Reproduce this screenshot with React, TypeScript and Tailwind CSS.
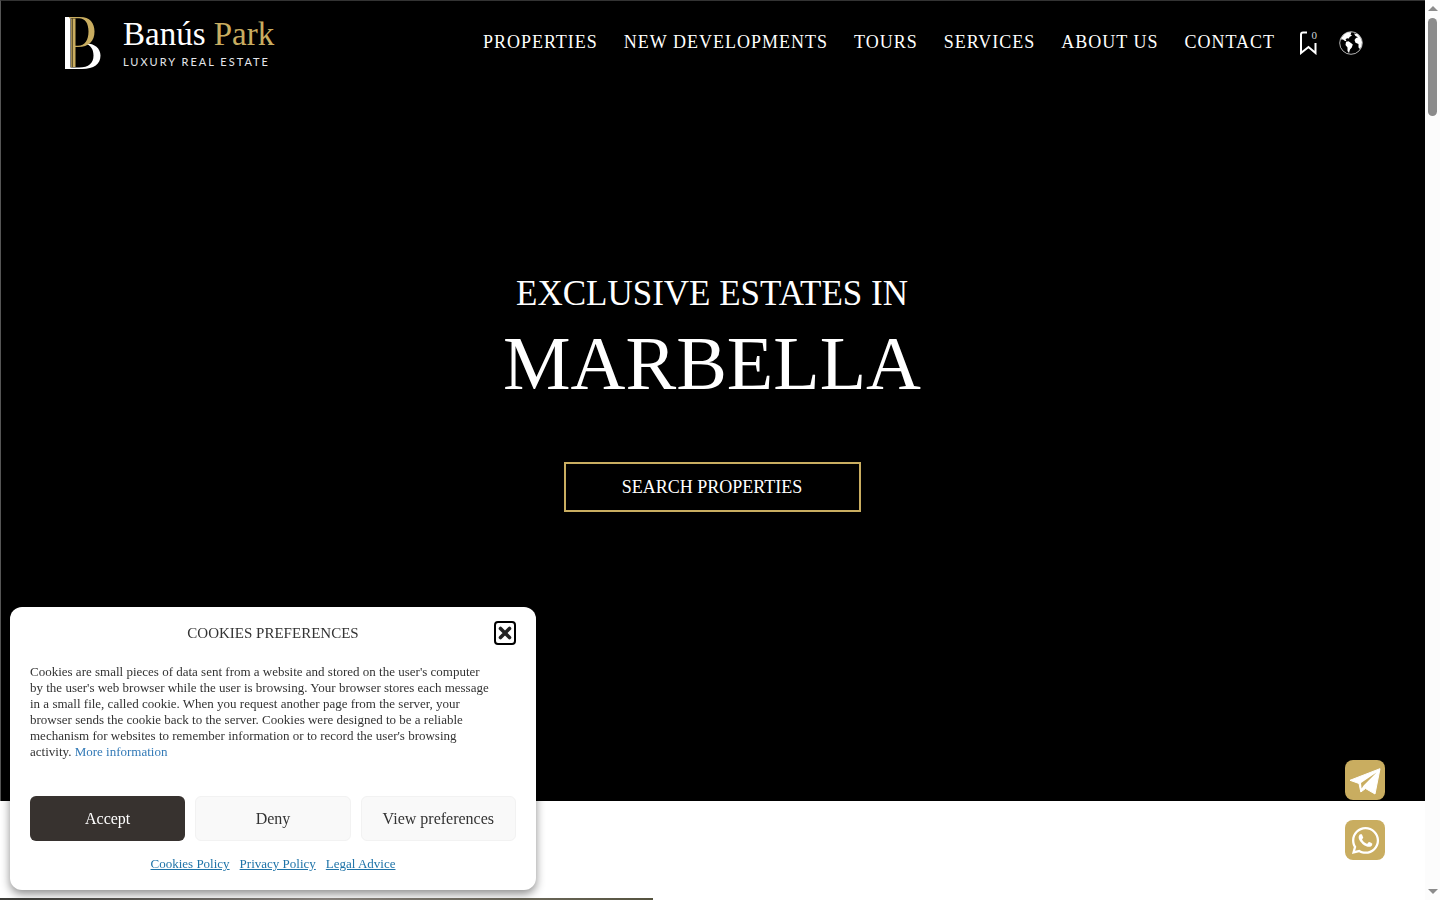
import { useState } from 'react';
import { FaWhatsapp } from 'react-icons/fa';

const NAV_LINKS = ['Properties', 'New developments', 'Tours', 'Services', 'About us', 'Contact'];

const POLICY_LINKS = ['Cookies Policy', 'Privacy Policy', 'Legal Advice'];

function LogoMark() {
  return (
    <svg width="36" height="52" viewBox="0 0 36 52" aria-hidden="true">
      <path d="M0 0h5.500v52H0z" fill="#fff" />
      <path
        d="M5 52V50.500H14C24 50.500 28.500 46 28.500 38.500C28.500 32 25.500 28 20 26.500C29 26 35.500 31 35.500 38.500C35.500 47 29 52 17 52Z"
        fill="#fff"
      />
      <path d="M6 1.500h0.800v49H6zM7.500 1.500h3v48.500h-3z" fill="#c9ad60" />
      <path
        d="M4 0H15C25 0 29.500 6 29.500 14.500C29.500 24 24 30 13 30H10V28.800H13C20 28.800 23.500 23 23.500 14.500C23.500 6 20 1.200 14 1.200H4Z"
        fill="#c9ad60"
      />
    </svg>
  );
}

function Logo() {
  return (
    <a href="#" aria-label="Banús Park" className="flex shrink-0 items-center gap-[22px]">
      <LogoMark />
      <span className="flex flex-col gap-0.5">
        <span className="text-[33px] leading-9 text-white">
          Banús <span className="text-[#c9ad60]">Park</span>
        </span>
        <span className="font-['Lato',sans-serif] text-[11px] leading-4 tracking-[2px] text-gray-200">
          LUXURY REAL ESTATE
        </span>
      </span>
    </a>
  );
}

function GlobeIcon() {
  return (
    <svg width="24" height="24" viewBox="0 0 24 24" aria-hidden="true">
      <circle cx="12" cy="12" r="11.300" fill="none" stroke="#fff" strokeWidth="0.700" />
      <path
        d="M2.500 6.500L5.500 3L9 1.200L12.500 1.200L11.500 3.500L13 4.500L10.500 6L10 7.500L8 7.200L6.500 8.500L7.500 10L6 10L4 8.500L2 8.500Z"
        fill="#fff"
      />
      <path d="M7 10.800L9.500 10.200L12 12L13.800 13.500L12.800 16.500L11 18.500L10 22L8.500 20L8.500 16.500L6.500 14Z" fill="#fff" />
      <path
        d="M15 2.500L18.500 3L21.500 6.500L23 11L22.500 15L21 18L19.500 16.500L19.500 13L16.500 11.800L15.500 9L17 7L19 6.200L16.500 5Z"
        fill="#fff"
      />
    </svg>
  );
}

function TelegramIcon() {
  return (
    <svg width="40" height="40" viewBox="0 0 40 40" aria-hidden="true">
      <path d="M5 20.300L35 8.700L30 34L20.500 28.500L15.800 32L14 23.500Z" fill="#fff" stroke="#fff" strokeLinejoin="round" />
      <path d="M31.500 12.500L16 23L16.600 28.500L18.600 25.500Z" fill="#c9ad60" />
    </svg>
  );
}

function Header() {
  return (
    <header className="flex items-center justify-between pt-[15px] pr-[62px] pl-16">
      <Logo />
      <div className="flex items-center gap-6">
        <nav className="flex items-center gap-[26px] pb-0.5 text-lg leading-6 tracking-[1px] whitespace-nowrap">
          {NAV_LINKS.map((label) => (
            <a key={label} href="#" className="uppercase hover:text-[#c9ad60]">
              {label}
            </a>
          ))}
        </nav>
        <div className="flex items-center gap-5">
          <a href="#" aria-label="Saved properties" className="relative block">
            <svg width="20" height="24" viewBox="0 0 20 24" aria-hidden="true">
              <path
                d="M8 1.500H4Q2 1.500 2 3.500V22L9.500 16L16.500 22V12"
                fill="none"
                stroke="#fff"
                strokeWidth="2"
              />
            </svg>
            <span className="absolute -top-1 right-0.5 text-[11px] leading-4 text-gray-300">0</span>
          </a>
          <button type="button" aria-label="Change language" className="block">
            <GlobeIcon />
          </button>
        </div>
      </div>
    </header>
  );
}

function Hero() {
  return (
    <section className="flex h-[89vh] flex-col border-t border-l border-t-[#333] border-l-[#555] bg-black text-white">
      <Header />
      <div className="flex flex-col items-center pt-[200px] pr-0.5">
        <h1 className="flex flex-col items-center">
          <span className="text-[35px] leading-12">EXCLUSIVE ESTATES IN</span>
          <span className="text-[76px] leading-[90px]">MARBELLA</span>
        </h1>
        <button
          type="button"
          className="mt-[54px] h-[50px] w-[297px] border-2 border-[#c9ad60] text-lg leading-6"
        >
          SEARCH PROPERTIES
        </button>
      </div>
    </section>
  );
}

function CookieBanner({ onClose }: { onClose: () => void }) {
  return (
    <div
      role="dialog"
      aria-labelledby="cookie-title"
      className="fixed bottom-2.5 left-2.5 w-[526px] rounded-xl bg-white px-5 pt-3.5 pb-[17px] text-[#333] shadow-[0_4px_10px_rgba(0,0,0,0.45)]"
    >
      <div className="grid grid-cols-[24px_1fr_24px] items-center">
        <h2 id="cookie-title" className="col-start-2 text-center text-[15px] leading-6">
          COOKIES PREFERENCES
        </h2>
        <button
          type="button"
          aria-label="Close"
          onClick={onClose}
          className="flex h-6 w-[22px] items-center justify-center justify-self-end rounded border-2 border-black"
        >
          <svg width="14" height="14" viewBox="0 0 14 14" aria-hidden="true">
            <path d="M2.500 2.500L11.500 11.500M11.500 2.500L2.500 11.500" stroke="#222" strokeWidth="3.600" strokeLinecap="round" />
          </svg>
        </button>
      </div>
      <p className="mt-[19px] text-[13px] leading-4">
        Cookies are small pieces of data sent from a website and stored on the user's computer
        <br />
        by the user's web browser while the user is browsing. Your browser stores each message
        <br />
        in a small file, called cookie. When you request another page from the server, your
        <br />
        browser sends the cookie back to the server. Cookies were designed to be a reliable
        <br />
        mechanism for websites to remember information or to record the user's browsing
        <br />
        activity.{' '}
        <a href="#" className="text-[#337ab7]">
          More information
        </a>
      </p>
      <div className="mt-9 grid grid-cols-3 gap-2.5 text-base">
        <button type="button" onClick={onClose} className="h-[45px] rounded-md bg-[#37322f] text-white">
          Accept
        </button>
        <button type="button" onClick={onClose} className="h-[45px] rounded-md border border-[#f2f2f2] bg-[#f9f9f9]">
          Deny
        </button>
        <button type="button" className="h-[45px] rounded-md border border-[#f2f2f2] bg-[#f9f9f9]">
          View preferences
        </button>
      </div>
      <div className="mt-3.5 flex justify-center gap-2.5 text-[13px] leading-[18px] text-[#1e73a8]">
        {POLICY_LINKS.map((label) => (
          <a key={label} href="#" className="underline">
            {label}
          </a>
        ))}
      </div>
    </div>
  );
}

function ContactButtons() {
  return (
    <div className="fixed right-[55px] bottom-10 flex flex-col gap-5 text-white">
      <a href="#" aria-label="Telegram" className="flex size-10 items-center justify-center rounded-lg bg-[#c9ad60]">
        <TelegramIcon />
      </a>
      <a href="#" aria-label="WhatsApp" className="flex size-10 items-center justify-center rounded-lg bg-[#c9ad60]">
        <FaWhatsapp size={31} />
      </a>
    </div>
  );
}

function ScrollTrack() {
  return (
    <div aria-hidden="true" className="flex w-[15px] shrink-0 flex-col items-center bg-[#fcfcfc] py-1.5">
      <span className="h-0 w-0 border-x-[5px] border-b-[5px] border-x-transparent border-b-[#8b8b8b]" />
      <span className="mt-[7px] h-[98px] w-[9px] rounded-full bg-[#8b8b8b]" />
      <span className="mt-auto h-0 w-0 border-x-[5px] border-t-[5px] border-x-transparent border-t-[#8b8b8b]" />
    </div>
  );
}

export default function App() {
  const [showCookies, setShowCookies] = useState(true);

  return (
    <div className="flex h-screen overflow-hidden bg-white font-['Liberation_Serif',serif]">
      <main className="flex min-w-0 flex-1 flex-col">
        <Hero />
        <div className="mt-auto h-0.5 w-[653px] bg-linear-to-r from-[#3c3c38] via-[#8f8984] to-[#55533f]" />
      </main>
      <ScrollTrack />
      {showCookies && <CookieBanner onClose={() => setShowCookies(false)} />}
      <ContactButtons />
    </div>
  );
}
